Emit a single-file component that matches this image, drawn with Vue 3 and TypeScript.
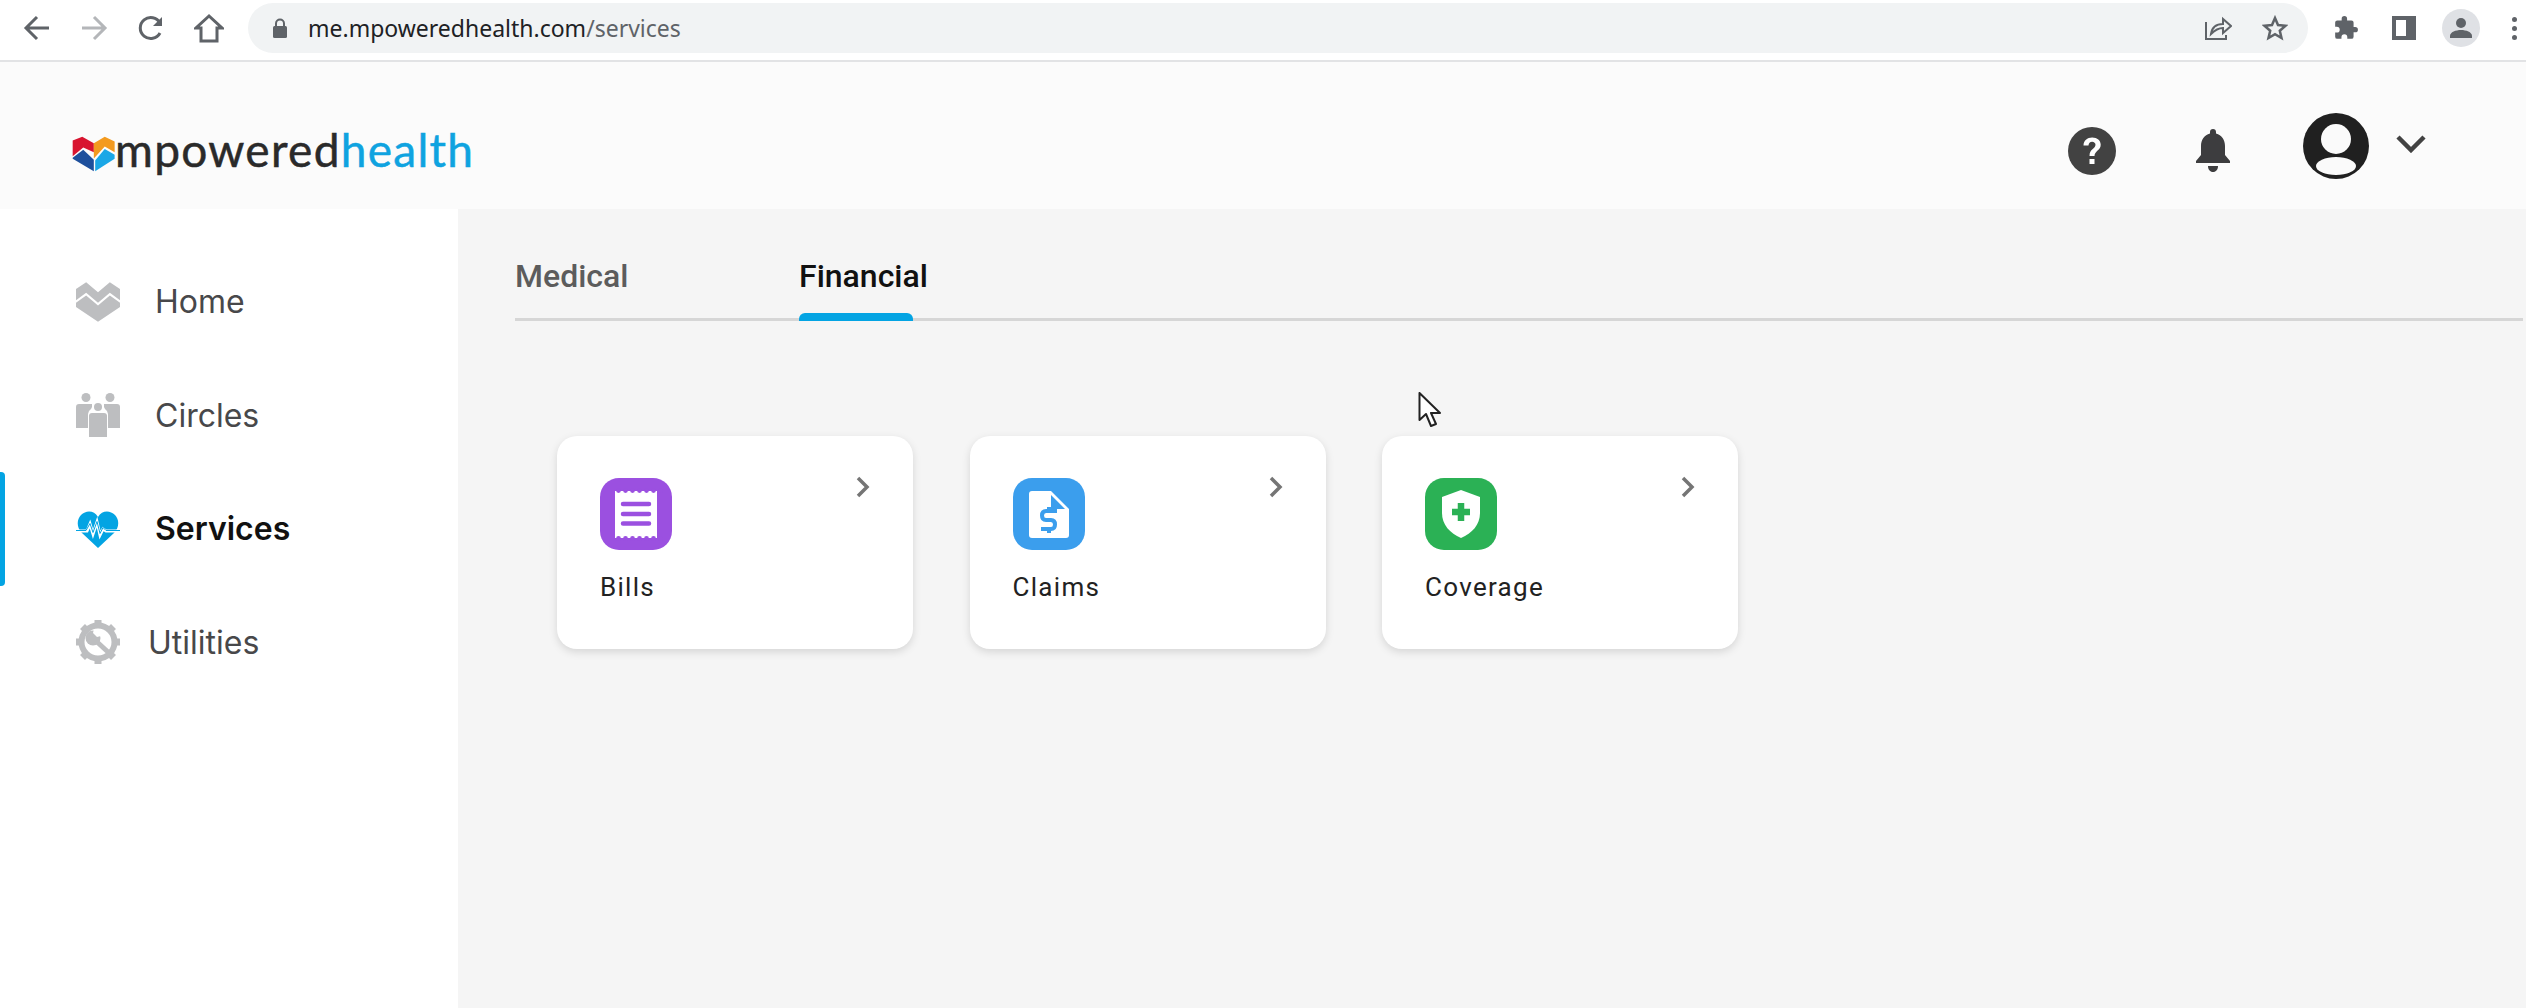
<script setup lang="ts">
interface Card {
  label: string
  kind: 'bills' | 'claims' | 'coverage'
}

const cards: Card[] = [
  { label: 'Bills', kind: 'bills' },
  { label: 'Claims', kind: 'claims' },
  { label: 'Coverage', kind: 'coverage' },
]

const scallops = [15, 22, 29, 36, 43, 50, 57]
</script>

<template>
  <div class="page">
    <div class="browser-bar">
      <svg class="nav-btn" width="28" height="28" viewBox="0 0 28 28" fill="none" stroke="#5f6368" stroke-width="3"><path d="M26 14H3M14 3 3 14l11 11" /></svg>
      <svg class="nav-btn fwd" width="28" height="28" viewBox="0 0 28 28" fill="none" stroke="#b4b6b9" stroke-width="3"><path d="M2 14h23M14 3l11 11-11 11" /></svg>
      <svg class="nav-btn" width="28" height="28" viewBox="0 0 28 28" fill="none" stroke="#5f6368" stroke-width="3"><path d="M23 19a10.500 10.500 0 1 1 0-10" /><path d="M25 3v9h-9z" fill="#5f6368" stroke="none" /></svg>
      <svg class="nav-btn" width="30" height="30" viewBox="0 0 30 30" fill="none" stroke="#5f6368" stroke-width="3"><path d="M15 3 2 15h5v13h16V15h5z" /></svg>
      <div class="omnibox">
        <svg width="16" height="20" viewBox="0 0 16 20" class="lock"><path d="M4 8V5.500a4 4 0 0 1 8 0V8" fill="none" stroke="#5f6368" stroke-width="2" /><rect x="1" y="8" width="14" height="12" rx="1.500" fill="#5f6368" /></svg>
        <span class="url">me.mpoweredhealth.com<span class="url-path">/services</span></span>
        <svg class="omni-share" width="28" height="26" viewBox="0 0 28 26" fill="none" stroke="#5f6368" stroke-width="2"><path d="M2 7v17h20v-4" /><path d="M7 19c1-7 6-10 12-10V4l8 7-8 7v-5c-5 0-8 2-12 6z" /></svg>
        <svg class="omni-star" width="26" height="26" viewBox="0 0 26 26" fill="none" stroke="#5f6368" stroke-width="2.500"><path d="m13 3 3 7 7.500.7-5.700 5 1.700 7.300-6.500-3.900L6.500 23l1.700-7.300-5.700-5L10 10z" /></svg>
      </div>
      <svg class="ext" width="26" height="26" viewBox="0 0 24 24" fill="#5f6368"><path d="M20.500 11H19V7a2 2 0 0 0-2-2h-4V3.500a2.500 2.500 0 0 0-5 0V5H4a2 2 0 0 0-2 2v3.800h1.500a2.700 2.700 0 0 1 0 5.400H2V20a2 2 0 0 0 2 2h3.800v-1.500a2.700 2.700 0 0 1 5.400 0V22H17a2 2 0 0 0 2-2v-4h1.500a2.500 2.500 0 0 0 0-5z" /></svg>
      <div class="side-panel"></div>
      <div class="chrome-avatar">
        <svg width="24" height="24" viewBox="0 0 24 24" fill="#5f6368"><circle cx="12" cy="7" r="5" /><path d="M1 22v-2c0-4 6-6 11-6s11 2 11 6v2z" /></svg>
      </div>
      <div class="dots"><i></i><i></i><i></i></div>
    </div>

    <header class="app-header">
      <div class="logo">
        <svg class="logo-mark" width="48" height="38" viewBox="60 80 145 115">
          <path d="M68 97 97 85l35 20v27l-32-14-32 26z" fill="#d8142f" />
          <path d="m132 105 33-20 30 15v32l-30-17-33 36z" fill="#f39a1e" />
          <path d="m68 149 32-24 32 30v35l-64-38z" fill="#1d4f9c" />
          <path d="m136 157 29-35 30 18v12l-59 38z" fill="#1aa7e6" />
        </svg>
        <span class="logo-text">mpowered<span class="logo-accent">health</span></span>
      </div>
      <div class="header-actions">
        <svg width="48" height="48" viewBox="0 0 48 48"><circle cx="24" cy="24" r="24" fill="#424242" /><path d="M15.500 18.500c0-5 3.800-8 8.700-8 5 0 8.500 3 8.500 7.200 0 5.800-6.200 6.100-6.200 11.300h-5c0-7 6-7.300 6-11.200 0-1.800-1.400-3.100-3.400-3.100-2.100 0-3.500 1.400-3.600 3.800z" fill="#fff" /><rect x="21.500" y="32" width="5" height="5" fill="#fff" /></svg>
        <svg class="bell" width="34" height="43" viewBox="0 0 34 43" fill="#3d3d3f"><path d="M17 0c1.900 0 3 1.300 3 3v1.400C25.700 5.800 29 10.800 29 17v9l5 6v2H0v-2l5-6v-9C5 10.800 8.300 5.800 14 4.400V3c0-1.700 1.100-3 3-3z" /><path d="M12 37h10c0 3.500-2 6-5 6s-5-2.500-5-6z" /></svg>
        <svg class="user-icon" width="66" height="66" viewBox="0 0 66 66"><circle cx="33" cy="33" r="33" fill="#202020" /><circle cx="33" cy="26" r="15" fill="#fafafa" /><ellipse cx="33" cy="53" rx="20" ry="9" fill="#fafafa" /></svg>
        <svg class="caret" width="30" height="18" viewBox="0 0 30 18" fill="none" stroke="#424242" stroke-width="4.500"><path d="m2 2 13 13L28 2" /></svg>
      </div>
    </header>

    <div class="body-row">
      <aside class="sidebar">
        <div class="nav-item">
          <svg class="nav-icon" width="44" height="40" viewBox="228 185 130 117" fill="#bdbec0">
            <path d="m228 205 30-20 35 30 35-30 30 20v33l-30-22-35 30-35-30-30 22z" />
            <path d="m228 246 30-22 35 30 35-30 30 22v12l-65 44-65-44z" />
          </svg>
          <span>Home</span>
        </div>
        <div class="nav-item">
          <svg class="nav-icon" width="44" height="44" viewBox="0 0 44 44" fill="#bdbec0">
            <circle cx="10" cy="4.500" r="4.500" /><circle cx="34" cy="4.500" r="4.500" /><circle cx="22" cy="14" r="4" />
            <path d="M0 14q0-3 3-3h13v3l-1 2q-3 2-3 5v14H0zM44 14q0-3-3-3H28v3l1 2q3 2 3 5v14h12z" />
            <path d="M13 23q0-3 3-3h12q3 0 3 3v21H13z" />
          </svg>
          <span>Circles</span>
        </div>
        <div class="nav-item active">
          <svg class="nav-icon" width="44" height="38" viewBox="0 0 44 38">
            <path d="M22 38 6 23C0 17 1 9 5 5c5-5 13-5 17 2 4-7 12-7 17-2 4 4 5 12-1 18z" fill="#03a4e3" />
            <path d="M0 21h11l3-7 3 10 4-12 3 13 3-6 3 2h14" fill="none" stroke="#fff" stroke-width="3" />
            <path d="M0 20.500h10l4-7 3 9 4-11 3 12 3-6 3 3h14" fill="none" stroke="#03a4e3" stroke-width="1" />
          </svg>
          <span>Services</span>
        </div>
        <div class="nav-item tools">
          <svg class="nav-icon" width="44" height="44" viewBox="0 0 44 44">
            <circle cx="22" cy="22" r="16.500" fill="none" stroke="#bdbec0" stroke-width="6" />
            <g stroke="#bdbec0" stroke-width="7">
              <path d="M22 0v7M22 37v7M0 22h7M37 22h7M6.500 6.500l5 5M32.500 32.500l5 5M6.500 37.500l5-5M32.500 11.500l5-5" />
            </g>
            <path d="M20 21 32 32" stroke="#bdbec0" stroke-width="5" />
            <circle cx="17" cy="18" r="7.500" fill="#bdbec0" />
            <path d="M18 9h7v7l-4 1-4-4z" fill="#fff" />
          </svg>
          <span>Utilities</span>
        </div>
      </aside>

      <main class="content">
        <div class="tabs">
          <div class="tab">Medical</div>
          <div class="tab tab-active">Financial</div>
        </div>

        <div class="cards">
          <div v-for="card in cards" :key="card.label" class="card">
            <div class="card-top">
              <div :class="['card-icon', card.kind]">
                <svg v-if="card.kind === 'bills'" width="72" height="72" viewBox="0 0 72 72">
                  <rect x="15" y="13" width="42" height="47" fill="#fff" />
                  <circle v-for="x in scallops" :key="'t' + x" :cx="x + 3.500" cy="12.500" r="2.400" fill="#9b50e0" />
                  <circle v-for="x in scallops" :key="'b' + x" :cx="x + 3.500" cy="60.500" r="2.400" fill="#9b50e0" />
                  <path d="M23 26h26M23 36h26M23 45.500h26" stroke="#9b50e0" stroke-width="4.500" stroke-linecap="round" />
                </svg>
                <svg v-else-if="card.kind === 'claims'" width="72" height="72" viewBox="0 0 72 72">
                  <path d="M19 13h19l18 18v26q0 3-3 3H19q-3 0-3-3V16q0-3 3-3z" fill="#fff" />
                  <path d="M38 17v14h14z" fill="#3b9eed" />
                  <path d="M44 33H33q-4 0-4 4.500t4 4.500h5q4 0 4 4.500T38 51H28M36 29v4M36 51v4" fill="none" stroke="#3b9eed" stroke-width="4" />
                </svg>
                <svg v-else width="72" height="72" viewBox="0 0 72 72">
                  <path d="M36 12 55 19v16c0 12-8 20-19 25-11-5-19-13-19-25V19z" fill="#fff" />
                  <path d="M36 25v18M27 34h18" stroke="#2bb155" stroke-width="6.500" />
                </svg>
              </div>
              <svg class="chevron" width="14" height="22" viewBox="0 0 14 22" fill="none" stroke="#757575" stroke-width="3.500"><path d="m2 2 9 9-9 9" /></svg>
            </div>
            <div class="card-label">{{ card.label }}</div>
          </div>
        </div>
      </main>
    </div>

    <svg class="cursor" width="24" height="36" viewBox="0 0 24 36"><path d="M1.500 1v27l6.500-6 5 12 5-2-5-11h9z" fill="#fff" stroke="#222" stroke-width="2" stroke-linejoin="round" /></svg>
  </div>
</template>

<style scoped>
.page {
  position: relative;
  display: flex;
  flex-direction: column;
  height: 1008px;
  overflow: hidden;
  background: #f5f5f5;
  font-family: Inter, "Liberation Sans", sans-serif;
}

.browser-bar {
  display: flex;
  align-items: center;
  flex: none;
  height: 62px;
  box-sizing: border-box;
  padding: 0 8px 4px 23px;
  background: #fff;
  border-bottom: 2px solid #e2e3e5;
}

.nav-btn {
  margin-right: 29px;
  flex: none;
}

.omnibox {
  display: flex;
  align-items: center;
  width: 2060px;
  height: 50px;
  margin-left: -5px;
  box-sizing: border-box;
  padding: 0 20px 0 24px;
  border-radius: 25px;
  background: #f1f3f4;
  flex: none;
}

.lock {
  flex: none;
}

.url {
  margin-left: 20px;
  font-family: "Noto Sans", sans-serif;
  font-size: 23px;
  color: #202124;
  flex: 1;
}

.url-path {
  color: #5f6368;
}

.omni-share {
  margin-right: 30px;
}

.ext {
  margin-left: 25px;
  flex: none;
}

.side-panel {
  width: 24px;
  height: 24px;
  margin-left: 33px;
  box-sizing: border-box;
  border: 4px solid #5f6368;
  border-right-width: 10px;
  flex: none;
}

.chrome-avatar {
  display: flex;
  align-items: center;
  justify-content: center;
  width: 38px;
  height: 38px;
  margin-left: 26px;
  border-radius: 50%;
  background: #dfe1e5;
  flex: none;
}

.dots {
  display: flex;
  flex-direction: column;
  gap: 4px;
  margin-left: 32px;
}

.dots i {
  display: block;
  width: 5px;
  height: 5px;
  border-radius: 50%;
  background: #5f6368;
}

.app-header {
  display: flex;
  align-items: center;
  justify-content: space-between;
  flex: none;
  height: 147px;
  box-sizing: border-box;
  padding: 22px 100px 0 70px;
  background: #fbfbfb;
}

.logo {
  display: flex;
  align-items: center;
  margin-top: 6px;
}

.logo-mark {
  flex: none;
  margin-top: 8px;
}

.logo-text {
  margin-left: -3px;
  font-family: Lato, sans-serif;
  font-size: 46px;
  line-height: 1;
  letter-spacing: 1.300px;
  color: #2a2a2a;
  -webkit-text-stroke: 0.5px currentColor;
}

.logo-accent {
  color: #0fa3e0;
}

.header-actions {
  display: flex;
  align-items: center;
  margin-top: 8px;
}

.bell {
  margin-left: 80px;
}

.user-icon {
  margin-left: 73px;
  margin-top: -10px;
}

.caret {
  margin-left: 27px;
  margin-top: -14px;
}

.body-row {
  display: flex;
  flex: 1;
  min-height: 0;
}

.sidebar {
  flex: none;
  width: 458px;
  box-sizing: border-box;
  padding-top: 36px;
  background: #fff;
}

.nav-item {
  position: relative;
  display: flex;
  align-items: center;
  gap: 35px;
  height: 113.500px;
  padding-left: 76px;
  font-size: 32px;
  color: #48484a;
}

.nav-icon {
  flex: none;
}

.nav-item.active {
  font-weight: 600;
  color: #111;
}

.nav-item.active::before {
  content: "";
  position: absolute;
  left: 0;
  top: 0;
  bottom: 0;
  width: 5px;
  border-radius: 0 4px 4px 0;
  background: #03a4e3;
}

.nav-item.tools {
  gap: 28px;
}

.content {
  flex: 1;
  min-width: 0;
  padding-left: 57px;
  padding-right: 3px;
}

.tabs {
  display: flex;
  height: 112px;
  box-sizing: border-box;
  border-bottom: 3px solid #d6d6d6;
  font-family: Roboto, sans-serif;
  font-size: 32px;
  font-weight: 500;
  color: #5c5c5c;
}

.tab {
  position: relative;
  width: 284px;
  padding-top: 43px;
  line-height: 48px;
}

.tab-active {
  color: #111;
}

.tab-active::after {
  content: "";
  position: absolute;
  left: 0;
  bottom: -3px;
  width: 114px;
  height: 8px;
  border-radius: 6px 6px 0 0;
  background: #03a4e3;
}

.cards {
  display: flex;
  gap: 56.500px;
  margin: 115px 0 0 42px;
}

.card {
  width: 356px;
  height: 213px;
  box-sizing: border-box;
  padding: 42px 43px;
  border-radius: 20px;
  background: #fff;
  box-shadow: 0 3px 9px rgba(0, 0, 0, 0.13);
}

.card-top {
  display: flex;
  align-items: flex-start;
  justify-content: space-between;
}

.card-icon {
  width: 72px;
  height: 72px;
  border-radius: 19px;
}

.card-icon svg {
  display: block;
}

.bills {
  background: #9b50e0;
}

.claims {
  background: #3b9eed;
}

.coverage {
  background: #2bb155;
}

.chevron {
  margin-top: -2px;
}

.card-label {
  margin-top: 22px;
  font-family: Roboto, sans-serif;
  font-size: 26px;
  line-height: 30px;
  letter-spacing: 1.300px;
  color: #222;
}

.cursor {
  position: absolute;
  left: 1418px;
  top: 392px;
}
</style>
